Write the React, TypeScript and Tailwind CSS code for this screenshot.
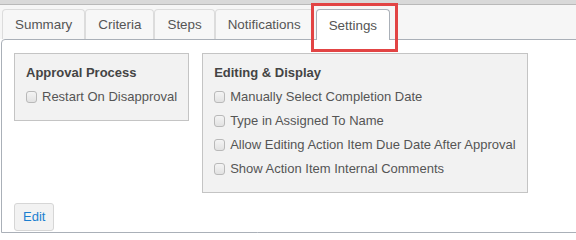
import React from "react";

const tabs = ["Summary", "Criteria", "Steps", "Notifications", "Settings"];

function Check({ label }: { label: string }) {
  return (
    <label className="mt-1 flex h-5 items-center text-[13px] text-[#555]">
      <span className="mr-[5px] h-[12px] w-[11px] rounded-[3px] border border-[#b9b9b9] bg-gradient-to-b from-[#f4f4f4] to-[#e2e2e2]" />
      {label}
    </label>
  );
}

function Group({ title, items }: { title: string; items: string[] }) {
  return (
    <div className="border border-[#c4c4c4] bg-[#f2f2f2] pb-[13px] pl-[11px] pr-[11px] pt-[9px]">
      <div className="h-5 text-[13px] font-bold leading-5 text-[#444]">{title}</div>
      {items.map((i) => (
        <Check key={i} label={i} />
      ))}
    </div>
  );
}

export default function App() {
  return (
    <div className="relative h-[237px] w-[576px] overflow-hidden bg-white font-['Liberation_Sans',Arial,sans-serif]">
      <div className="h-1 bg-[#d9d9d9]" />
      <div className="flex h-[35px] items-end border-t border-[#b9b9b9] bg-[#f6f6f6] pl-[2px]">
        {tabs.map((t) => {
          const active = t === "Settings";
          return (
            <div
              key={t}
              className={
                active
                  ? "relative z-10 -mb-px ml-[2px] flex h-[31px] items-center rounded-t-[4px] border border-b-0 border-[#aab0b8] bg-white px-3 pt-[2px] text-[13.4px] text-[#555]"
                  : "flex h-[30px] items-center rounded-t-[4px] border border-b-0 border-[#dcdcdc] bg-[#f7f7f7] px-3 pt-[2px] text-[13.4px] text-[#555]"
              }
            >
              {t}
            </div>
          );
        })}
      </div>
      <div className="ml-px h-[194px] w-[600px] rounded-tl-[4px] border border-[#aab0b8] bg-white pl-3 pt-[13px]">
        <div className="flex items-start gap-[13px]">
          <Group title="Approval Process" items={["Restart On Disapproval"]} />
          <Group
            title="Editing & Display"
            items={[
              "Manually Select Completion Date",
              "Type in Assigned To Name",
              "Allow Editing Action Item Due Date After Approval",
              "Show Action Item Internal Comments",
            ]}
          />
        </div>
        <button className="mt-[10px] h-[28px] rounded-[3px] border border-[#d6d6d6] bg-[#f2f2f2] px-2 text-[13px] text-[#1b7fd0]">
          Edit
        </button>
      </div>
      <div className="absolute left-[311px] top-[3px] h-[49px] w-[87px] border-[3px] border-[#e24444]" />
    </div>
  );
}
